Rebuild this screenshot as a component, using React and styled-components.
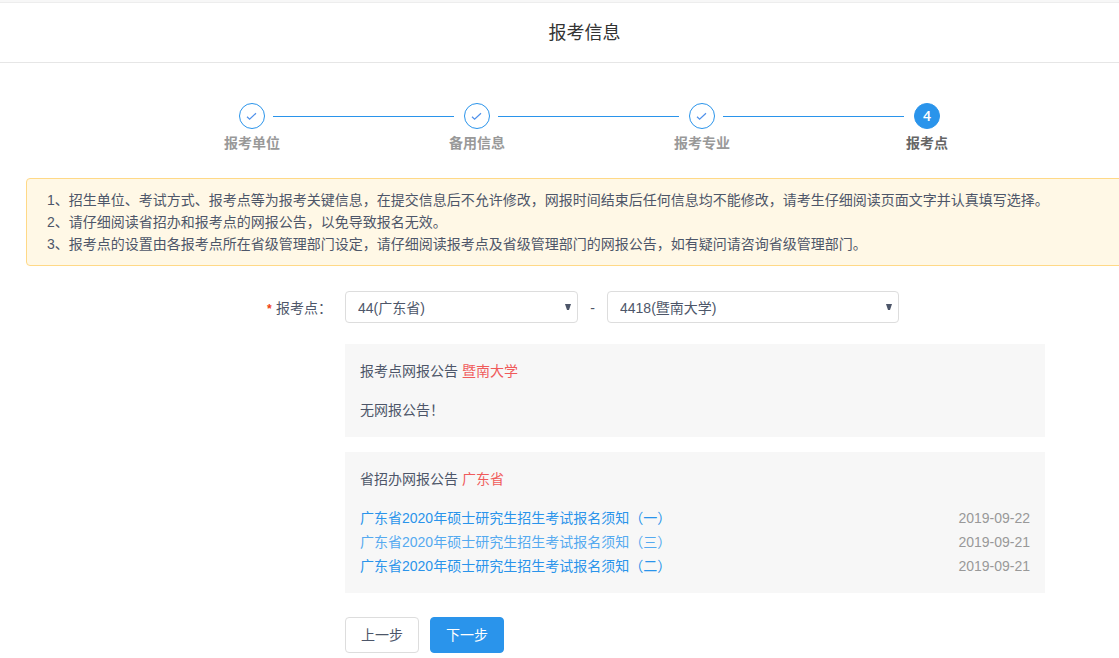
import { useState } from 'react';
import styled, { createGlobalStyle, css } from 'styled-components';

const GlobalStyle = createGlobalStyle`
  * {
    box-sizing: border-box;
  }

  body {
    margin: 0;
    overflow-x: hidden;
    background-color: #fff;
    color: #4d5669;
    font-family: 'Liberation Sans', 'Noto Sans CJK SC', sans-serif;
    font-size: 14px;
    line-height: 22px;
  }

  button,
  select {
    color: inherit;
    font: inherit;
  }
`;

const Page = styled.div`
  min-width: 1169px;
  border-top: 2px solid #f7f7f7;
`;

const Header = styled.header`
  padding: 17px 0 15px;
  border-top: 1px solid #ededed;
  border-bottom: 1px solid #e6e6e6;
`;

const Title = styled.h1`
  margin: 0;
  color: #333;
  font-size: 18px;
  font-weight: 400;
  line-height: 27px;
  text-align: center;
`;

const Content = styled.main`
  padding: 40px 16px 5px 26px;
`;

const StepList = styled.ol`
  display: flex;
  max-width: 900px;
  margin: 0 auto 24px;
  padding: 0;
  list-style: none;
`;

const StepItem = styled.li`
  display: grid;
  flex: 1;
  grid-template-columns: 1fr 26px 1fr;
  row-gap: 3px;
  align-items: center;
`;

const Line = styled.span`
  height: 1px;
  background-color: ${(props) => (props.$hidden ? 'transparent' : '#2a94eb')};
  margin: ${(props) => (props.$side === 'left' ? '1px 10px 0 0' : '1px 0 0 8px')};
`;

const Circle = styled.span`
  display: flex;
  align-items: center;
  justify-content: center;
  height: 26px;
  border: 1px solid #2a94eb;
  border-radius: 50%;
  color: #2a94eb;
  font-family: 'Open Sans', sans-serif;
  font-weight: 600;

  ${(props) =>
    props.$active &&
    css`
      background-color: #2a94eb;
      color: #fff;
    `}
`;

const StepLabel = styled.span`
  grid-column: 1 / -1;
  color: ${(props) => (props.$active ? '#666' : '#999')};
  font-weight: 700;
  text-align: center;
`;

const Notice = styled.ol`
  margin: 0 0 25px;
  padding: 10px 20px;
  border: 1px solid #ffd987;
  border-radius: 4px;
  background-color: #fff8e6;
  list-style: none;
`;

const Form = styled.form`
  display: grid;
  grid-template-columns: 306px 700px;
  column-gap: 13px;
`;

const Label = styled.label`
  line-height: 34px;
  text-align: right;
`;

const Required = styled.span`
  margin-right: 3px;
  color: #f04114;
  font-family: 'Liberation Mono', monospace;
  font-size: 12px;
  font-weight: 700;
`;

const Fields = styled.div`
  display: flex;
  align-items: center;
  margin-bottom: 21px;
`;

const Dash = styled.span`
  width: 29px;
  padding-top: 2px;
  text-align: center;
`;

const SelectBox = styled.div`
  position: relative;
  width: ${(props) => props.$width};
`;

const StyledSelect = styled.select`
  display: block;
  width: 100%;
  height: 32px;
  padding: 2px 24px 0 12px;
  border: 1px solid #ddd;
  border-radius: 4px;
  background-color: #fff;
  appearance: none;
`;

const Arrow = styled.svg`
  position: absolute;
  top: 13px;
  right: 7px;
  pointer-events: none;
`;

const Body = styled.div`
  grid-column: 2;
`;

const Panel = styled.section`
  display: flex;
  flex-direction: column;
  gap: 15px;
  margin-bottom: 15px;
  padding: 15px;
  background-color: #f7f7f7;
  line-height: 24px;
`;

const PanelTitle = styled.h2`
  margin: 0;
  font-size: 14px;
  font-weight: 400;
`;

const Place = styled.span`
  color: #f05b5b;
`;

const Text = styled.p`
  margin: 0;
`;

const NewsList = styled.ul`
  margin: 0;
  padding: 0;
  list-style: none;
`;

const NewsItem = styled.li`
  display: flex;
  justify-content: space-between;
`;

const NewsLink = styled.a`
  color: ${(props) => (props.$light ? '#55aaf0' : '#2a94eb')};
  text-decoration: none;
`;

const NewsDate = styled.time`
  color: #999;
`;

const Actions = styled.div`
  display: flex;
  gap: 11px;
  margin-top: 24px;
`;

const Button = styled.button`
  width: 74px;
  height: 36px;
  padding: 0;
  border: 1px solid #ddd;
  border-radius: 4px;
  background-color: #fff;
  cursor: pointer;

  ${(props) =>
    props.$primary &&
    css`
      border-color: #2a94eb;
      background-color: #2a94eb;
      color: #fff;
    `}
`;

const steps = ['报考单位', '备用信息', '报考专业', '报考点'];

const notices = [
  '1、招生单位、考试方式、报考点等为报考关键信息，在提交信息后不允许修改，网报时间结束后任何信息均不能修改，请考生仔细阅读页面文字并认真填写选择。',
  '2、请仔细阅读省招办和报考点的网报公告，以免导致报名无效。',
  '3、报考点的设置由各报考点所在省级管理部门设定，请仔细阅读报考点及省级管理部门的网报公告，如有疑问请咨询省级管理部门。',
];

const news = [
  { title: '广东省2020年硕士研究生招生考试报名须知（一）', date: '2019-09-22' },
  {
    title: '广东省2020年硕士研究生招生考试报名须知（三）',
    date: '2019-09-21',
    light: true,
  },
  { title: '广东省2020年硕士研究生招生考试报名须知（二）', date: '2019-09-21' },
];

function Steps({ current }) {
  return (
    <StepList>
      {steps.map((step, i) => {
        const active = i === current;
        return (
          <StepItem key={step} aria-current={active ? 'step' : undefined}>
            <Line $side='left' $hidden={i === 0} />
            <Circle $active={active}>
              {active ? (
                i + 1
              ) : (
                <svg width='12' height='12' viewBox='0 0 12 12' fill='none'>
                  <path
                    d='M1 6.8 L3.6 9.2 L10 3.2'
                    stroke='#4f90ea'
                    strokeWidth='1.2'
                  />
                </svg>
              )}
            </Circle>
            <Line $side='right' $hidden={i === steps.length - 1} />
            <StepLabel $active={active}>{step}</StepLabel>
          </StepItem>
        );
      })}
    </StepList>
  );
}

function Select({ width, options, ...props }) {
  return (
    <SelectBox $width={width}>
      <StyledSelect {...props}>
        {options.map((option) => (
          <option key={option}>{option}</option>
        ))}
      </StyledSelect>
      <Arrow width='6' height='6' viewBox='0 0 6 6' aria-hidden='true'>
        <path d='M0 0h6L4 6H2z' fill='#4d5669' />
      </Arrow>
    </SelectBox>
  );
}

function App() {
  const [province, setProvince] = useState('44(广东省)');
  const [site, setSite] = useState('4418(暨南大学)');

  return (
    <>
      <GlobalStyle />
      <Page>
        <Header>
          <Title>报考信息</Title>
        </Header>

        <Content>
          <Steps current={3} />

          <Notice>
            {notices.map((notice) => (
              <li key={notice}>{notice}</li>
            ))}
          </Notice>

          <Form onSubmit={(e) => e.preventDefault()}>
            <Label htmlFor='province'>
              <Required>*</Required>报考点：
            </Label>
            <Fields>
              <Select
                id='province'
                width='233px'
                options={['44(广东省)']}
                value={province}
                onChange={(e) => setProvince(e.target.value)}
              />
              <Dash>-</Dash>
              <Select
                aria-label='报考点'
                width='292px'
                options={['4418(暨南大学)']}
                value={site}
                onChange={(e) => setSite(e.target.value)}
              />
            </Fields>

            <Body>
              <Panel>
                <PanelTitle>
                  报考点网报公告 <Place>暨南大学</Place>
                </PanelTitle>
                <Text>无网报公告！</Text>
              </Panel>

              <Panel>
                <PanelTitle>
                  省招办网报公告 <Place>广东省</Place>
                </PanelTitle>
                <NewsList>
                  {news.map(({ title, date, light }) => (
                    <NewsItem key={title}>
                      <NewsLink href='#' $light={light}>
                        {title}
                      </NewsLink>
                      <NewsDate>{date}</NewsDate>
                    </NewsItem>
                  ))}
                </NewsList>
              </Panel>

              <Actions>
                <Button type='button'>上一步</Button>
                <Button type='submit' $primary>
                  下一步
                </Button>
              </Actions>
            </Body>
          </Form>
        </Content>
      </Page>
    </>
  );
}

export default App;
